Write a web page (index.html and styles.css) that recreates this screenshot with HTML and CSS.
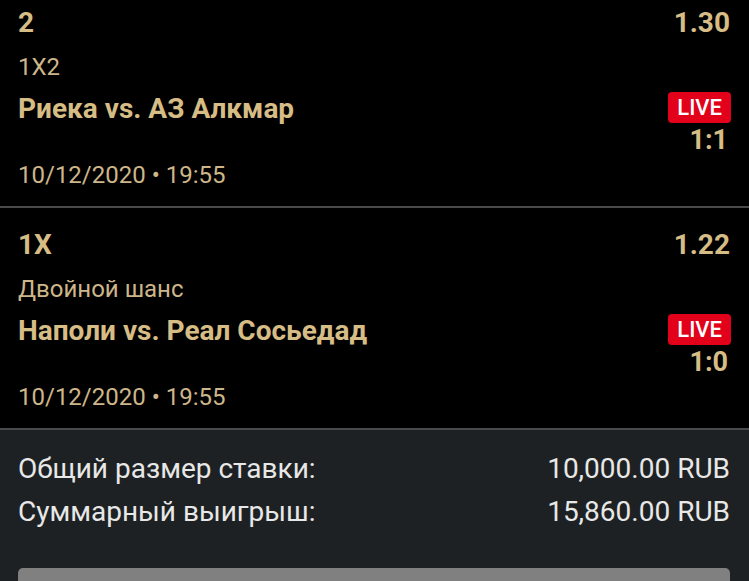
FILE: index.html
```html
<!DOCTYPE html>
<html>
  <head>
    <title>Купон</title>
    <link rel="stylesheet" href="styles.css">
  </head>
  <body>
    <div class="slip">
      <div class="bet">
        <div class="bet-head">
          <span class="pick">2</span>
          <span class="odds">1.30</span>
        </div>
        <div class="market">1X2</div>
        <div class="match">
          <div class="teams">Риека vs. АЗ Алкмар</div>
          <div class="live-box">
            <span class="live">LIVE</span>
            <span class="score">1:1</span>
          </div>
        </div>
        <div class="date">10/12/2020 • 19:55</div>
      </div>
      <div class="bet">
        <div class="bet-head">
          <span class="pick">1X</span>
          <span class="odds">1.22</span>
        </div>
        <div class="market">Двойной шанс</div>
        <div class="match">
          <div class="teams">Наполи vs. Реал Сосьедад</div>
          <div class="live-box">
            <span class="live">LIVE</span>
            <span class="score">1:0</span>
          </div>
        </div>
        <div class="date">10/12/2020 • 19:55</div>
      </div>
      <div class="totals">
        <div class="total-row">
          <span>Общий размер ставки:</span>
          <span>10,000.00 RUB</span>
        </div>
        <div class="total-row">
          <span>Суммарный выигрыш:</span>
          <span>15,860.00 RUB</span>
        </div>
        <button class="place" type="button"></button>
      </div>
    </div>
  </body>
</html>
```

FILE: styles.css
```css
/* Bet slip, dark theme */
body {
  margin: 0;
  background: #000;
  font-family: Roboto, "Noto Sans", sans-serif;
  overflow: hidden;
}
.slip {
  margin-top: -14px;
}
.bet {
  padding: 20px 19px 16px 18px;
  border-bottom: 2px solid #4a4a4a;
  color: #d6bc85;
}
.bet-head {
  display: flex;
  justify-content: space-between;
  font-size: 28px;
  font-weight: bold;
  line-height: 34px;
}
.market {
  margin-top: 12px;
  font-size: 24px;
  line-height: 30px;
  color: #cdb689;
}
.match {
  display: flex;
  justify-content: space-between;
  align-items: flex-start;
  margin-top: 10px;
}
.teams {
  font-size: 28px;
  font-weight: bold;
  line-height: 34px;
}
.live-box {
  display: flex;
  flex-direction: column;
  align-items: flex-end;
  margin-right: -1px;
}
.live {
  height: 31px;
  padding: 0 9px;
  border-radius: 4px;
  background: #e2001a;
  color: #fff;
  font-size: 22px;
  font-weight: 500;
  line-height: 32px;
}
.score {
  margin-right: 3px;
  font-size: 27px;
  font-weight: bold;
  line-height: 34px;
}
.date {
  margin-top: 3px;
  font-size: 24px;
  line-height: 30px;
  color: #cdb689;
}
.totals {
  padding: 22px 19px 0 18px;
  background: #1e2123;
  color: #e8e8e8;
  height: 200px;
}
.total-row {
  display: flex;
  justify-content: space-between;
  font-size: 28px;
  line-height: 34px;
}
.total-row + .total-row {
  margin-top: 9px;
}
.place {
  display: block;
  width: 100%;
  height: 60px;
  margin-top: 39px;
  border: none;
  border-radius: 5px;
  background: #808080;
}
```
